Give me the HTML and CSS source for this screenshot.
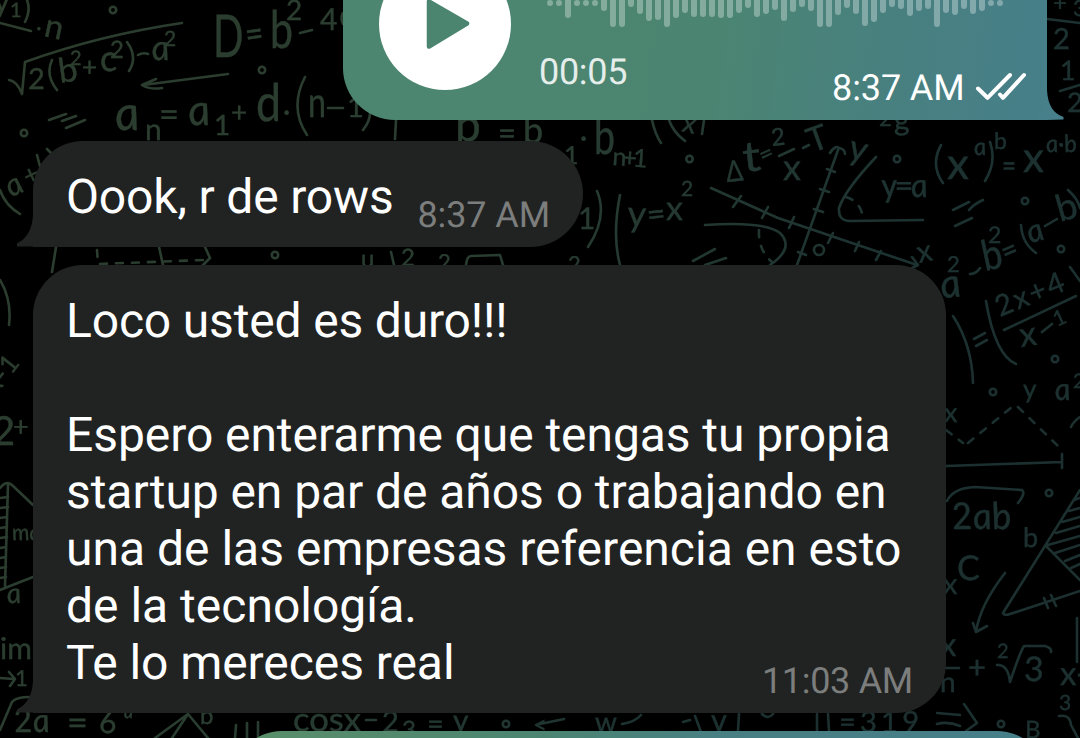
FILE: index.html
```html
<!DOCTYPE html>
<html lang="es">
<head>
<meta charset="utf-8">
<title>Chat</title>
<link rel="stylesheet" href="styles.css">
</head>
<body>
<svg class="wallpaper" width="1080" height="738" viewBox="0 0 1080 738" aria-hidden="true">
<defs>
<linearGradient id="ink" x1="0" y1="0" x2="1" y2="0.35"><stop offset="0" stop-color="#2c3d2d"/><stop offset="0.5" stop-color="#293d31"/><stop offset="0.85" stop-color="#1c3231"/><stop offset="1" stop-color="#1b302f"/></linearGradient>
<mask id="doodles" maskUnits="userSpaceOnUse" x="0" y="0" width="1080" height="738">
<g class="strokes">
<path d="M27 0Q31 10 25 22M0 23L31 31M9 80Q17 81 22 94L25 62Q100 35 182 23M52 60Q45 75 57 90M127 42Q138 57 129 71M138 55Q143 52 148 54M300 33L312 30M343 13Q340 18 343 24"/>
<path d="M228 74L143 85M156 79L142 85Q150 90 162 88M49 120L66 114M62 121L76 116M66 128L85 120M305 77Q289 108 307 135M328 108L343 108M370 110Q371 120 363 130M396 120L395 139"/>
<path d="M652 120Q655 134 661 143M669 120Q673 132 685 141M704 120L702 134M779 156L794 149M803 148L809 145M597 191Q608 217 588 247M620 195Q612 235 620 265"/>
<path d="M711 188L778 218L917 265M912 257L918 265L912 268M741 196L733 207M768 207L762 218M794 217L789 228M833 233L828 243M859 242L855 251M881 251L876 260M838 150L797 265M830 153Q835 145 839 148Q845 149 845 154M827 169L835 172M820 189L829 192M814 209L823 212M798 252L806 255"/>
<path d="M705 225Q765 221 780 233Q795 248 770 265M693 261L715 249M705 265L726 258M876 157Q845 190 839 208Q838 221 850 221L923 220"/>
<path class="dash" d="M759 230Q758 250 772 262M846 197Q862 202 863 220M97 250L98 264L203 260M946 430L963 443M968 443L1012 407M1018 407L1060 448"/>
<path d="M941 145Q930 165 943 183M990 142Q997 162 985 181M953 210L969 202M969 210Q974 204 983 200M955 226L972 218M970 274Q976 274 980 268M1021 225Q1022 243 1036 253M1045 226L1057 219M1068 190Q1078 199 1080 208M1047 19L1080 23M1060 91L1080 85M1070 267L1080 281"/>
<path d="M953 316Q972 345 973 383M974 339L985 333M976 346L987 340M986 301Q995 355 1016 364M1004 330L1076 296M1042 332L1052 324M1080 417Q1073 422 1071 427M946 466L1062 462M1062 454L1062 468M947 501Q953 488 975 487L1022 490Q1026 493 1018 503"/>
<path d="M1005 573Q980 605 976 632M973 623L976 632L987 626M1080 490L1003 613Q1004 616 1010 614L1080 591M1046 546L1080 580M1074 500L1080 498M1069 511L1080 508M1062 522L1080 517M1056 533L1080 526M1048 545L1080 536M1055 553L1080 545M1065 561L1080 555M1071 568L1080 564M1044 598L1048 608M1051 595L1056 606M1077 618L1077 662"/>
<path d="M946 668L959 668M997 665Q1008 664 1010 682Q1020 652 1024 646L1045 646Q1052 648 1051 652M1059 716Q1070 714 1071 725L1078 738M937 713L960 715M937 724Q948 721 960 726M964 704L977 723L966 731"/>
<path d="M0 280Q12 300 9 325M0 190Q5 205 20 214M37 155L41 170M47 149L51 153M0 488Q6 480 12 485L33 505M8 484L5 586M0 590L33 577M0 498L8 497M0 508L8 507M0 518L7 517M0 528L7 527M0 538L7 537M0 548L6 547M0 558L6 557M0 568L6 567M0 578L6 577M0 730L12 702Q16 697 30 697M0 678L14 679M9 672L15 679L10 686"/>
<path d="M56 247L52 272M159 247L163 265M205 247L210 258L203 265M391 252L394 265M466 265Q467 256 471 256L500 255L503 265M155 738L188 714L208 738M172 738L188 714M236 725L235 738M247 723L247 738M258 722L258 738M366 720L376 720M540 724L564 719M622 724Q635 722 641 715M683 722L690 720M695 716L701 732M739 714L738 731M762 714Q768 720 773 714M817 714L817 731M828 714L829 731"/>
<g class="dots"><circle cx="113" cy="10" r="3.2"/><circle cx="262" cy="70" r="3.2"/><circle cx="24" cy="133" r="3.2"/><circle cx="689.5" cy="159" r="3.2"/><circle cx="897" cy="159" r="3.2"/><circle cx="819" cy="250" r="5"/><circle cx="1025" cy="201" r="3.2"/><circle cx="1061" cy="249" r="3.2"/><circle cx="1055" cy="359" r="3.2"/><circle cx="993" cy="392" r="3.2"/><circle cx="1049" cy="493" r="3.2"/><circle cx="1001" cy="724" r="3.2"/><circle cx="275" cy="255" r="3.2"/><circle cx="506" cy="724" r="3.2"/></g>
</g>
<g class="formulas">
<text x="-6" y="12" font-size="30">y</text><text x="10" y="17" font-size="20">1</text><text x="36" y="30" font-size="24">.</text><text transform="translate(43 36) rotate(12)" font-size="33">n</text>
<text x="28" y="89" font-size="29">2</text><text transform="translate(60 83) rotate(-8)" font-size="34">b</text><text x="70" y="65" font-size="20">2</text><text x="82" y="76" font-size="26">+</text><text x="100" y="71" font-size="36">c</text><text x="110" y="58" font-size="24">2</text><text class="script" transform="translate(153 60) skewX(9)" font-size="35">a</text><text x="164" y="46" font-size="21">2</text>
<text transform="translate(213 57) scale(.68 1)" font-size="59">D</text><text transform="translate(247 48) rotate(-8)" font-size="38" textLength="18" lengthAdjust="spacingAndGlyphs">=</text><text x="270" y="48" font-size="52" textLength="23" lengthAdjust="spacingAndGlyphs">b</text><text x="286" y="20" font-size="28">2</text><text x="320" y="30" font-size="30">4</text>
<text class="script" transform="translate(117 130) skewX(9)" font-size="48">a</text><text x="145" y="140" font-size="30">n</text><text x="159" y="127" font-size="37" textLength="20" lengthAdjust="spacingAndGlyphs">=</text><text class="script" transform="translate(190 125) skewX(9)" font-size="43">a</text><text x="214" y="135" font-size="28">1</text><text x="231" y="122" font-size="28">+</text><text x="256" y="121" font-size="52" textLength="25" lengthAdjust="spacingAndGlyphs">d</text><text x="283" y="121" font-size="28">·</text><text x="308" y="117" font-size="42" textLength="18" lengthAdjust="spacingAndGlyphs">n</text><text x="347" y="117" font-size="29">1</text>
<text x="455" y="141" font-size="46">b</text><text x="498" y="145" font-size="34" textLength="18" lengthAdjust="spacingAndGlyphs">=</text><text x="523" y="143" font-size="36">b</text><text x="580" y="147" font-size="28">·</text><text x="594" y="154" font-size="50" textLength="21" lengthAdjust="spacingAndGlyphs">b</text><text transform="translate(681 131) rotate(12)" font-size="27">x</text><text transform="translate(612 165) rotate(4)" font-size="25" textLength="35">n+1</text><text x="564" y="164" font-size="25">1</text><text x="578" y="229" font-size="30">1</text>
<text transform="translate(627 226) rotate(3)" font-size="36">y</text><text transform="translate(648 226) rotate(-6)" font-size="32">=</text><text x="666" y="220" font-size="34">x</text><text x="681" y="196" font-size="21">2</text>
<text transform="translate(727 182) rotate(-6)" font-size="29" textLength="17" lengthAdjust="spacingAndGlyphs">Δ</text><text transform="translate(744 172) rotate(-6)" font-size="42" textLength="18" lengthAdjust="spacingAndGlyphs">t</text><text transform="translate(763 164) rotate(-24)" font-size="24">=</text><text transform="translate(772 146) rotate(-6)" font-size="24">2</text><text x="783" y="180" font-size="36">x</text><text transform="translate(812 153) rotate(-20)" font-size="34">T</text>
<text transform="translate(847 158) rotate(14)" font-size="35">y</text><text class="script" transform="translate(883 197) skewX(9)" font-size="33" textLength="46">y=a</text><text x="879" y="126" font-size="22">2</text><text x="894" y="130" font-size="30">g</text>
<text x="947" y="179" font-size="44">x</text><text class="script" transform="translate(975 155) skewX(9)" font-size="24">a</text><text x="994" y="149" font-size="23">b</text><text x="1002" y="176" font-size="30" textLength="14" lengthAdjust="spacingAndGlyphs">=</text><text x="1023" y="172" font-size="42">x</text><text class="script" transform="translate(1047 152) skewX(9)" font-size="24" textLength="31">a·b</text>
<text class="script" transform="translate(943 298) rotate(-5) skewX(9)" font-size="40">a</text><text x="947" y="272" font-size="22">2</text><text transform="translate(985 271) rotate(-12)" font-size="42" textLength="20" lengthAdjust="spacingAndGlyphs">b</text><text x="988" y="243" font-size="23">2</text><text transform="translate(1006 263) rotate(-23)" font-size="31" textLength="16" lengthAdjust="spacingAndGlyphs">=</text><text class="script" transform="translate(1031 243) rotate(-15) skewX(9)" font-size="32">a</text><text transform="translate(1060 222) rotate(-16)" font-size="37">b</text><text transform="translate(919 263) rotate(-12)" font-size="30">x</text>
<text x="1053" y="11" font-size="24">+</text><text x="1073" y="16" font-size="22">3</text><text x="1053" y="49" font-size="29">2</text><text x="1060" y="80" font-size="27">1</text><text x="1067" y="112" font-size="27">2</text>
<text transform="translate(1000 317) rotate(-22)" font-size="29" textLength="72">2x+4</text><text transform="translate(1021 347) rotate(-8)" font-size="34">x</text><text transform="translate(1057 327) rotate(-25)" font-size="21">1</text><text x="1023" y="398" font-size="26">y</text><text class="script" transform="translate(1056 400) skewX(9)" font-size="31">a</text><text x="1073" y="388" font-size="20">2</text><text x="944" y="422" font-size="27">x</text>
<text class="script" transform="translate(953 529) skewX(9)" font-size="37" textLength="60">2ab</text><text x="1023" y="547" font-size="27">b</text><text x="957" y="580" font-size="34">C</text><text x="943" y="594" font-size="29">x</text><text x="940" y="656" font-size="33">x</text><text x="940" y="692" font-size="28">n</text><text x="968" y="678" font-size="31">+</text><text x="997" y="658" font-size="20">2</text><text x="1024" y="681" font-size="34">3</text><text x="1060" y="685" font-size="33">x-</text><text x="1059" y="710" font-size="21">3</text><text x="1025" y="738" font-size="24">B</text>
<text class="script" transform="translate(12 197) rotate(-25) skewX(9)" font-size="31">a</text><text transform="translate(28 186) rotate(-25)" font-size="26">+</text><text transform="translate(-4 395) rotate(-52)" font-size="26" textLength="40">x-1</text><text x="-8" y="445" font-size="40">2</text><text x="13" y="436" font-size="27">+</text><text class="script" transform="translate(13 540) skewX(9)" font-size="22">ma</text><text class="script" transform="translate(8 603) skewX(9)" font-size="28">a</text><text x="0" y="659" font-size="30">im</text><text x="15" y="686" font-size="22">1</text>
<text class="script" transform="translate(15 732) skewX(9)" font-size="33" textLength="36">2a</text><text x="67" y="735" font-size="36">=</text><text x="99" y="733" font-size="30">6</text><text x="200" y="724" font-size="24">b</text><text x="293" y="731" font-size="33" textLength="68" lengthAdjust="spacingAndGlyphs">cosx</text><text x="382" y="732" font-size="29">2</text><text x="402" y="738" font-size="24">3</text><text x="427" y="734" font-size="29">=</text><text x="453" y="731" font-size="30">y</text><text x="533" y="733" font-size="24">&lt;</text><text class="script" x="124" y="718" font-size="18">a</text>
<text x="595" y="732" font-size="28">w</text><text x="711" y="731" font-size="31">v</text><text x="839" y="732" font-size="29" textLength="80">=319</text><text x="361" y="267" font-size="24">u</text><text x="401" y="266" font-size="24">2</text><text x="438" y="270" font-size="22">2</text><text x="568" y="272" font-size="22">2</text>
</g>
</mask>
</defs>
<rect width="1080" height="738" fill="url(#ink)" mask="url(#doodles)"/>
</svg>

<main class="chat">
<section class="bubble voice">
<svg class="play" width="132" height="132" viewBox="0 0 132 132" aria-label="Play"><circle cx="66" cy="66" r="66" fill="#fff"/><path d="M50 43.5L88 65.5L50 88.500Z" fill="#4b8570" stroke="#4b8570" stroke-width="4.500" stroke-linejoin="round"/></svg>
<div class="track">
<svg class="wave" width="460" height="30" viewBox="547 0 460 30" aria-hidden="true"><path d="M550 3V3M559 3V3M568 -3V15M577 3V3M586 3V3M595 3V3M604 -3V8M613 -3V24M622 -3V24M631 -3V4M640 -3V11M649 -3V18M658 -3V17M667 -3V24M676 -3V15M685 -3V10M694 -3V14M703 -3V14M712 -3V14M721 -3V15M730 -3V15M739 -3V10M748 -3V5M757 -3V14M766 -3V11M775 -3V7M784 -3V18M793 -3V9M802 -3V4M811 -3V8M820 -3V24M829 -3V24M838 -3V12M847 -3V5M856 -3V11M865 -3V23M874 -3V19M883 -3V10M892 -3V4M901 -3V6M910 -3V13M919 -3V8M928 -3V6M937 -3V24M946 -3V10M955 -3V12M964 -3V6M973 -3V11M982 -3V8M991 3V3M1000 3V3"/></svg>
<span class="duration">00:05</span>
</div>
<div class="status"><span class="time">8:37 AM</span><svg class="checks" width="54" height="30" viewBox="974 72 54 30" aria-label="Read"><path d="M978 88.500L987.500 97.800L1010 75M1000 94.500L1003 97.800L1024 75"/></svg></div>
<svg class="tail-out" width="17" height="30" viewBox="0 0 17 30" aria-hidden="true"><path d="M0 0Q1 22 16.500 27V29.500L0 30Z" fill="#477f8a"/></svg>
</section>

<section class="bubble reply short">
<p class="message"><span class="line tight">Oook, r de rows</span></p><span class="time">8:37 AM</span>
<svg class="tail-in" width="18" height="32" viewBox="0 0 18 32" aria-hidden="true"><path d="M18 0H17Q16 21 1 28.500L1 31.500H18Z" fill="#212322"/></svg>
</section>

<section class="bubble reply long">
<p class="message"><span class="line tight">Loco usted es duro!!!</span><br><br><span class="line snug">Espero enterarme que tengas tu propia</span><br><span class="line snug">startup en par de años o trabajando en</span><br><span class="line">una de las empresas referencia en esto</span><br><span class="line">de la tecnología.</span><br><span class="line snug">Te lo mereces real</span></p>
<span class="time">11:03 AM</span>
<svg class="tail-in" width="18" height="32" viewBox="0 0 18 32" aria-hidden="true"><path d="M18 0H17Q16 21 1 28.500L1 31.500H18Z" fill="#212322"/></svg>
</section>

<svg class="next" width="815" height="7" viewBox="0 0 815 7" aria-hidden="true">
<defs><linearGradient id="sent"><stop offset="0" stop-color="#5b8f6a"/><stop offset="0.38" stop-color="#4b8571"/><stop offset="0.6" stop-color="#487f83"/><stop offset="1" stop-color="#477f8a"/></linearGradient></defs>
<rect width="815" height="100" rx="50" fill="url(#sent)"/>
</svg>
</main>
</body>
</html>
```

FILE: styles.css
```css
* { box-sizing: border-box; }
body {
  margin: 0;
  width: 1080px;
  height: 738px;
  overflow: hidden;
  position: relative;
  background: #000;
  font-family: Roboto, "Noto Sans", sans-serif;
  text-rendering: geometricPrecision;
}
.wallpaper { position: absolute; inset: 0; }
.strokes { fill: none; stroke: #fff; stroke-width: 2.6; stroke-linecap: round; stroke-linejoin: round; }
.dash { stroke-dasharray: 7 9; }
.formulas { fill: #fff; stroke: #fff; stroke-width: .3; font-family: Lato, "Open Sans", sans-serif; }
.script { font-style: italic; }
.chat { position: relative; height: 738px; display: flex; flex-direction: column; align-items: flex-start; }
.bubble { position: relative; display: flex; flex: none; }
.voice {
  width: 704px;
  height: 119.500px;
  margin-left: 343px;
  padding-left: 36px;
  border-radius: 0 0 0 52px;
  background: linear-gradient(97deg, #4d8670 0%, #4b8571 52%, #48807f 76%, #477f8a 100%);
}
.play { flex: none; margin-top: -42px; }
.track { width: 322px; margin-left: 28px; display: flex; flex-direction: column; }
.wave { flex: none; margin: 0 -146px 21px 8px; }
.wave path { fill: none; stroke: #fff; stroke-opacity: .32; stroke-width: 6; stroke-linecap: round; }
.duration { color: #e5eeea; font-size: 36px; line-height: 42px; letter-spacing: -.3px; }
.status { display: flex; align-items: flex-start; margin-left: -29px; padding-top: 67px; color: #fff; }
.time { font-size: 36px; line-height: 42px; white-space: nowrap; letter-spacing: -.1px; }
.checks { flex: none; margin: 5px 0 0 9px; }
.checks path { fill: none; stroke: #fff; stroke-width: 4; stroke-linecap: round; stroke-linejoin: round; }
.tail-out { position: absolute; left: 703.500px; bottom: 0; }
.reply { margin-left: 33px; background: #212322; color: #fff; }
.message { margin: 0; font-size: 48px; line-height: 57px; white-space: nowrap; }
.tight { letter-spacing: -.17px; }
.snug { letter-spacing: -.07px; }
.reply .time { color: #7c7e7d; }
.short { width: 550px; height: 105.500px; margin-top: 21.500px; padding: 27px 33px 0 33px; border-radius: 50px 53px 53px 0; justify-content: space-between; }
.short .time { margin-top: 26px; }
.long { width: 913px; height: 448px; margin-top: 18.500px; padding: 27px 33px 0; border-radius: 50px 50px 50px 0; }
.long .time { margin-left: auto; align-self: flex-end; margin-bottom: 11px; letter-spacing: -.3px; }
.long .message { width: 680px; }
.tail-in { position: absolute; left: -17px; bottom: 0; }
.next { display: block; flex: none; margin: 18px 0 0 232px; overflow: hidden; }
```
